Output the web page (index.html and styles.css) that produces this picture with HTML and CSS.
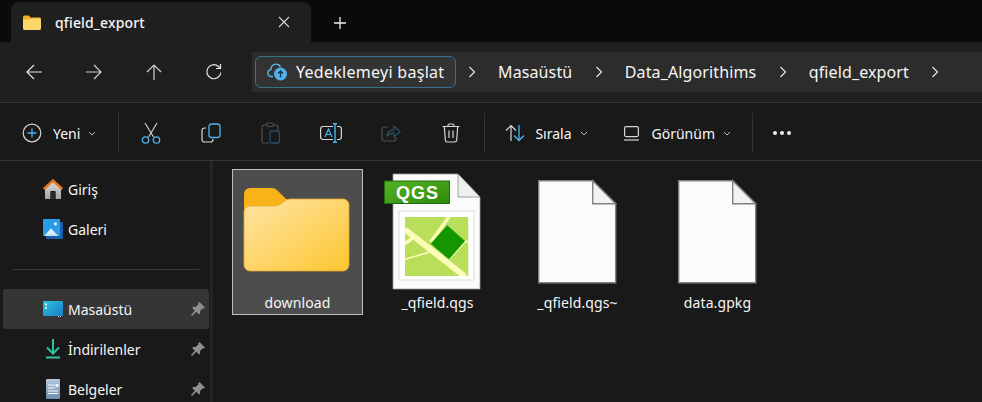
FILE: index.html
```html
<!DOCTYPE html>
<html lang="tr">

<head>
    <meta charset="UTF-8">
    <meta name="viewport" content="width=device-width, initial-scale=1.0">
    <title>qfield_export</title>
    <link rel="stylesheet" href="styles.css">
</head>

<body>
    <div class="tabbar">
        <div class="tab">
            <svg class="tab-icon" width="18" height="15" viewBox="0 0 18 15">
                <path d="M0 2a1.500 1.500 0 0 1 1.500-1.500h4.200l2 2H16.500a1.500 1.500 0 0 1 1.500 1.500V6H0z" fill="#f2b01e" />
                <path d="M0 4.500h7.500l1.500-1h7.500a1.500 1.500 0 0 1 1.500 1.500v8.500a1.500 1.500 0 0 1-1.500 1.500h-15A1.500 1.500 0 0 1 0 13.500z" fill="#fcd668" />
            </svg>
            <span class="tab-title">qfield_export</span>
            <svg class="tab-close" width="12" height="12" viewBox="0 0 12 12">
                <path d="M1 1l10 10M11 1L1 11" stroke="#d8d8d8" stroke-width="1.100" fill="none" />
            </svg>
        </div>
        <svg class="tab-add" width="14" height="14" viewBox="0 0 14 14">
            <path d="M7 1v12M1 7h12" stroke="#f0f0f0" stroke-width="1.300" fill="none" />
        </svg>
    </div>

    <div class="navbar">
        <button class="nav-btn" type="button">
            <svg width="18" height="18" viewBox="0 0 18 18"><path d="M17 9H2M9 2L2 9l7 7" class="line" /></svg>
        </button>
        <button class="nav-btn" type="button">
            <svg width="18" height="18" viewBox="0 0 18 18"><path d="M1 9h15M9 2l7 7-7 7" class="line dim" /></svg>
        </button>
        <button class="nav-btn" type="button">
            <svg width="18" height="18" viewBox="0 0 18 18"><path d="M9 17V2M2 9l7-7 7 7" class="line dim" /></svg>
        </button>
        <button class="nav-btn" type="button">
            <svg width="18" height="18" viewBox="0 0 18 18"><path d="M15.800 9.500A7 7 0 1 1 13.500 3.500L15.500 5.500M15.500 1v4.500H11" class="line" /></svg>
        </button>
        <div class="address">
            <div class="backup">
                <svg width="22" height="20" viewBox="0 0 22 20">
                    <path d="M6 14.500H4.500a3.500 3.500 0 0 1-.5-7A5 5 0 0 1 13.500 5" fill="none" stroke="#5cb6e6" stroke-width="1.400" />
                    <circle cx="13.500" cy="12" r="6.500" fill="#4fb3ea" />
                    <path d="M13.500 15.500v-6M11 11.500l2.500-2.500 2.500 2.500" fill="none" stroke="#12384f" stroke-width="1.400" />
                </svg>
                <span>Yedeklemeyi başlat</span>
            </div>
            <svg class="crumb-sep first" width="8" height="12" viewBox="0 0 8 12"><path d="M1.500 1l5 5-5 5" class="line" /></svg>
            <span class="crumb">Masaüstü</span>
            <svg class="crumb-sep" width="8" height="12" viewBox="0 0 8 12"><path d="M1.500 1l5 5-5 5" class="line" /></svg>
            <span class="crumb">Data_Algorithims</span>
            <svg class="crumb-sep" width="8" height="12" viewBox="0 0 8 12"><path d="M1.500 1l5 5-5 5" class="line" /></svg>
            <span class="crumb">qfield_export</span>
            <svg class="crumb-sep" width="8" height="12" viewBox="0 0 8 12"><path d="M1.500 1l5 5-5 5" class="line" /></svg>
        </div>
    </div>

    <div class="toolbar">
        <button class="tool tool-new" type="button">
            <svg width="20" height="20" viewBox="0 0 20 20">
                <circle cx="10" cy="10" r="8.800" fill="none" stroke="#d6d6d6" stroke-width="1.200" />
                <path d="M10 5.500v9M5.500 10h9" stroke="#4cb4f0" stroke-width="1.300" fill="none" />
            </svg>
            <span>Yeni</span>
            <svg class="chev" width="8" height="5" viewBox="0 0 8 5"><path d="M1 1l3 3 3-3" class="chev-line" /></svg>
        </button>
        <div class="tool-sep"></div>
        <div class="tool-icons">
            <button class="tool-icon" type="button">
                <svg width="20" height="22" viewBox="0 0 20 22">
                    <path d="M4 1l8.500 14M16 1L7.500 15" stroke="#d6d6d6" stroke-width="1.100" fill="none" />
                    <circle cx="4.500" cy="18" r="3.200" fill="none" stroke="#4cb4f0" stroke-width="1.300" />
                    <circle cx="15.500" cy="18" r="3.200" fill="none" stroke="#4cb4f0" stroke-width="1.300" />
                </svg>
            </button>
            <button class="tool-icon" type="button">
                <svg width="20" height="20" viewBox="0 0 20 20">
                    <path d="M5 5H3.500A2.500 2.500 0 0 0 1 7.500v9A2.500 2.500 0 0 0 3.500 19h6a2.500 2.500 0 0 0 2.500-2.500V16" fill="none" stroke="#d6d6d6" stroke-width="1.200" />
                    <rect x="8" y="1" width="11" height="13.500" rx="2.500" fill="none" stroke="#4cb4f0" stroke-width="1.300" />
                </svg>
            </button>
            <button class="tool-icon" type="button">
                <svg width="20" height="22" viewBox="0 0 20 22">
                    <path d="M5 3H3.500A2.500 2.500 0 0 0 1 5.500v13A2.500 2.500 0 0 0 3.500 21H8M13 3h1.500A2.500 2.500 0 0 1 17 5.500V8" fill="none" stroke="#505050" stroke-width="1.200" />
                    <rect x="5.500" y="1" width="7" height="3.500" rx="1.500" fill="none" stroke="#505050" stroke-width="1.200" />
                    <rect x="9" y="9" width="9.500" height="12" rx="2" fill="none" stroke="#2b4d63" stroke-width="1.300" />
                </svg>
            </button>
            <button class="tool-icon" type="button">
                <svg width="22" height="20" viewBox="0 0 22 20">
                    <path d="M13 3.500H3A2.500 2.500 0 0 0 .6 6v8A2.500 2.500 0 0 0 3 16.500h10M17 3.500h2A2.500 2.500 0 0 1 21.400 6v8a2.500 2.500 0 0 1-2.400 2.500h-2" fill="none" stroke="#d6d6d6" stroke-width="1.200" />
                    <path d="M5 14L8.500 6 12 14M6.300 11.500h4.400" fill="none" stroke="#4cb4f0" stroke-width="1.200" />
                    <path d="M13 .8h4M13 19.200h4M15 .8v18.400" fill="none" stroke="#4cb4f0" stroke-width="1.400" />
                </svg>
            </button>
            <button class="tool-icon" type="button">
                <svg width="20" height="20" viewBox="0 0 20 20">
                    <path d="M7 4H3.500A2.500 2.500 0 0 0 1 6.500v9A2.500 2.500 0 0 0 3.500 18h9a2.500 2.500 0 0 0 2.500-2.500V14" fill="none" stroke="#505050" stroke-width="1.200" />
                    <path d="M6 13c.5-4 3-6 7-6V3l6 5.500L13 14v-4c-3 0-5 1-7 3z" fill="none" stroke="#2b4d63" stroke-width="1.300" />
                </svg>
            </button>
            <button class="tool-icon" type="button">
                <svg width="18" height="20" viewBox="0 0 18 20">
                    <path d="M.5 3.500h17M6 3.500V2.500A1.500 1.500 0 0 1 7.500 1h3A1.500 1.500 0 0 1 12 2.500v1M2.300 3.500l1 13.500A2.200 2.200 0 0 0 5.500 19h7a2.200 2.200 0 0 0 2.200-2L15.700 3.500" fill="none" stroke="#d6d6d6" stroke-width="1.200" />
                    <path d="M7 7.500v7.500M11 7.500v7.500" fill="none" stroke="#d6d6d6" stroke-width="1.200" />
                </svg>
            </button>
        </div>
        <div class="tool-sep"></div>
        <button class="tool tool-sort" type="button">
            <svg width="20" height="18" viewBox="0 0 20 18">
                <path d="M6 17V1.500M1 6.500l5-5 5 5" fill="none" stroke="#d6d6d6" stroke-width="1.200" />
                <path d="M14 1v15.500M9 11.500l5 5 5-5" fill="none" stroke="#4cb4f0" stroke-width="1.300" />
            </svg>
            <span>Sırala</span>
            <svg class="chev" width="8" height="5" viewBox="0 0 8 5"><path d="M1 1l3 3 3-3" class="chev-line" /></svg>
        </button>
        <button class="tool tool-view" type="button">
            <svg width="17" height="15" viewBox="0 0 17 15">
                <rect x="1.600" y=".6" width="13.800" height="10" rx="1.500" fill="none" stroke="#d6d6d6" stroke-width="1.200" />
                <path d="M1 14h15" stroke="#d6d6d6" stroke-width="1.200" fill="none" />
            </svg>
            <span>Görünüm</span>
            <svg class="chev" width="8" height="5" viewBox="0 0 8 5"><path d="M1 1l3 3 3-3" class="chev-line" /></svg>
        </button>
        <div class="tool-sep"></div>
        <button class="tool-more" type="button">
            <i></i><i></i><i></i>
        </button>
    </div>

    <div class="main">
        <nav class="sidebar">
            <div class="side-item">
                <svg width="20" height="20" viewBox="0 0 20 20">
                    <defs>
                        <linearGradient id="homeWall" x1="0" y1="0" x2="0" y2="1">
                            <stop offset="0" stop-color="#dcdcdc" />
                            <stop offset="1" stop-color="#a4a4a4" />
                        </linearGradient>
                    </defs>
                    <path d="M2 8.500L10 2l8 6.500V20h-5.500v-8h-5v8H2z" fill="url(#homeWall)" />
                    <path d="M7.500 13h5v7h-5z" fill="#2a2a2a" />
                    <path d="M.8 10L10 1.500 19.200 10" fill="none" stroke="#e8761a" stroke-width="2.400" />
                </svg>
                <span>Giriş</span>
            </div>
            <div class="side-item">
                <svg width="20" height="20" viewBox="0 0 20 20">
                    <defs>
                        <linearGradient id="hill" x1="0" y1="0" x2="0" y2="1">
                            <stop offset="0" stop-color="#ffffff" />
                            <stop offset="1" stop-color="#bcdcf6" />
                        </linearGradient>
                    </defs>
                    <rect x="3" y="3" width="17" height="17" rx="1" fill="#1c5fa8" />
                    <rect x="0" y="0" width="17" height="17" rx="1" fill="#2b9be8" />
                    <path d="M1 17l7-7.500 7.500 7.500z" fill="url(#hill)" />
                    <circle cx="12.500" cy="5" r="1.400" fill="#fff" />
                </svg>
                <span>Galeri</span>
            </div>
            <div class="side-divider"></div>
            <div class="side-item active">
                <svg width="20" height="16" viewBox="0 0 20 16">
                    <defs>
                        <linearGradient id="desk" x1="0" y1="0" x2="1" y2="1">
                            <stop offset="0" stop-color="#2cc4dc" />
                            <stop offset="1" stop-color="#1a7cc6" />
                        </linearGradient>
                    </defs>
                    <rect width="20" height="15" rx="1" fill="url(#desk)" />
                    <rect x="2" y="2.500" width="2" height="2" fill="#e8f6fc" />
                    <rect x="2" y="6" width="2" height="2" fill="#d0eef8" />
                    <rect x="15" y="15" width="1" height="1" fill="#d0d0d0" />
                    <rect x="17" y="15" width="1" height="1" fill="#d0d0d0" />
                </svg>
                <span>Masaüstü</span>
                <svg class="pin" width="14" height="14" viewBox="0 0 14 14"><path d="M8.500 0L14 5.500l-1.200 1-1-.3-2.600 2.600-.2 2.700-1 1-2.700-2.700L1 14 0 13l3.900-4.300L1.200 6l1-1 2.700-.2 2.600-2.600-.3-1z" fill="#8f8f8f" /></svg>
            </div>
            <div class="side-item">
                <svg width="20" height="20" viewBox="0 0 20 20">
                    <path d="M10 0v14.500M4 8.500l6 6 6-6" fill="none" stroke="#2ec4a0" stroke-width="2" />
                    <rect x="3" y="17.500" width="14" height="2" fill="#2ec4a0" />
                </svg>
                <span>İndirilenler</span>
                <svg class="pin" width="14" height="14" viewBox="0 0 14 14"><path d="M8.500 0L14 5.500l-1.200 1-1-.3-2.600 2.600-.2 2.700-1 1-2.700-2.700L1 14 0 13l3.900-4.300L1.200 6l1-1 2.700-.2 2.600-2.600-.3-1z" fill="#8f8f8f" /></svg>
            </div>
            <div class="side-item">
                <svg width="20" height="20" viewBox="0 0 20 20">
                    <defs>
                        <linearGradient id="doc" x1="0" y1="0" x2="0" y2="1">
                            <stop offset="0" stop-color="#b4c8dc" />
                            <stop offset="1" stop-color="#6c8cb2" />
                        </linearGradient>
                    </defs>
                    <rect x="3" y="0" width="14" height="20" rx="1" fill="url(#doc)" />
                    <path d="M5 6h6.500M5 9h6.500M5 12h10M5 14.500h10" stroke="#f4f8fc" stroke-width="1.100" fill="none" />
                    <rect x="12.500" y="5" width="3" height="3" fill="#f4f8fc" />
                </svg>
                <span>Belgeler</span>
                <svg class="pin" width="14" height="14" viewBox="0 0 14 14"><path d="M8.500 0L14 5.500l-1.200 1-1-.3-2.600 2.600-.2 2.700-1 1-2.700-2.700L1 14 0 13l3.900-4.300L1.200 6l1-1 2.700-.2 2.600-2.600-.3-1z" fill="#8f8f8f" /></svg>
            </div>
        </nav>

        <div class="files">
            <div class="file selected">
                <svg width="131" height="124" viewBox="0 0 131 124">
                    <defs>
                        <linearGradient id="folderFront" x1="0" y1="0" x2="1" y2="1">
                            <stop offset="0" stop-color="#ffe5a6" />
                            <stop offset="1" stop-color="#fdc62f" />
                        </linearGradient>
                    </defs>
                    <path d="M12 25a6 6 0 0 1 6-6h22a8 8 0 0 1 6 3l8 8h57a6 6 0 0 1 6 6v14H12z" fill="#f8b318" />
                    <path d="M12 43a6 6 0 0 1 6-6h24c8 0 9-7 17-7h52a6 6 0 0 1 6 6v60a6 6 0 0 1-6 6H18a6 6 0 0 1-6-6z" fill="url(#folderFront)" stroke="#e0a52b" stroke-width=".8" />
                </svg>
                <span>download</span>
            </div>
            <div class="file">
                <svg width="131" height="124" viewBox="0 0 131 124">
                    <defs>
                        <linearGradient id="qgsTag" x1="0" y1="0" x2="1" y2="1">
                            <stop offset="0" stop-color="#57b324" />
                            <stop offset="1" stop-color="#2c8a0a" />
                        </linearGradient>
                    </defs>
                    <path d="M21 5h65l22 23v92H21z" fill="#fbfbfb" stroke="#9a9a9a" stroke-width=".8" />
                    <path d="M86 5l22 23H86z" fill="#efefef" stroke="#8a8a8a" stroke-width=".8" />
                    <rect x="27" y="42" width="75" height="69" fill="#fff" stroke="#dcdcdc" />
                    <svg x="33" y="48" width="63.500" height="59" viewBox="33 48 63.500 59">
                        <rect x="33" y="48" width="63.500" height="59" fill="#b9df5a" />
                        <path d="M33 60.500l60 47M77 48L58.700 73M33 74.700l9-6.700" fill="none" stroke="#fbfcb8" stroke-width="3.500" />
                        <path d="M33 60.500l60 47" fill="none" stroke="#fbfcb8" stroke-width="6" />
                        <path d="M33 90.300l27.300-8M77 90.300L94 72l3 1.500" fill="none" stroke="#fbfcb8" stroke-width="1.500" />
                        <path d="M58.700 74.700l16.600-18.400L93 72 77 90.300z" fill="#149600" />
                    </svg>
                    <rect x="12.500" y="12" width="65" height="22.500" fill="url(#qgsTag)" stroke="#1f6e0a" />
                    <text x="45.500" y="30" class="qgs-label">QGS</text>
                </svg>
                <span>_qfield.qgs</span>
            </div>
            <div class="file">
                <svg width="131" height="124" viewBox="0 0 131 124">
                    <path d="M26.700 11.700h54l23 23v79h-77z" fill="#fbfbfb" stroke="#808080" stroke-width="1.400" />
                    <path d="M80.700 11.700l23 23h-23z" fill="#f2f2f2" stroke="#808080" stroke-width="1.400" />
                </svg>
                <span>_qfield.qgs~</span>
            </div>
            <div class="file">
                <svg width="131" height="124" viewBox="0 0 131 124">
                    <path d="M26.700 11.700h54l23 23v79h-77z" fill="#fbfbfb" stroke="#808080" stroke-width="1.400" />
                    <path d="M80.700 11.700l23 23h-23z" fill="#f2f2f2" stroke="#808080" stroke-width="1.400" />
                </svg>
                <span>data.gpkg</span>
            </div>
        </div>
    </div>
</body>

</html>
```

FILE: styles.css
```css
* {
    box-sizing: border-box;
}

html,
body {
    height: 100%;
}

body {
    background: #191919;
    color: #f6f6f6;
    font-family: "Noto Sans", sans-serif;
    font-size: 14px;
    margin: 0;
    overflow: hidden;
}

button {
    background: none;
    border: 0;
    color: inherit;
    font: inherit;
    padding: 0;
}

svg {
    display: block;
    flex: none;
}

.line {
    fill: none;
    stroke: #e4e4e4;
    stroke-width: 1.200;
}

.line.dim {
    stroke: #d0d0d0;
}

/* tabs */
.tabbar {
    align-items: flex-end;
    background: #0a0a0a;
    display: flex;
    height: 42px;
    padding-left: 11px;
}

.tab {
    align-items: center;
    background: #1f1f1f;
    border-radius: 8px 8px 0 0;
    display: flex;
    height: 40px;
    padding-left: 12px;
    width: 300px;
}

.tab-title {
    font-size: 14px;
    font-weight: 500;
    letter-spacing: .15px;
    margin-left: 14px;
}

.tab-close {
    margin-left: auto;
    margin-right: 21px;
}

.tab-add {
    margin-bottom: 12px;
    margin-left: 22px;
}

/* back, forward, address */
.navbar {
    align-items: center;
    background: #1f1f1f;
    border-bottom: 1px solid #333;
    display: flex;
    height: 61px;
    padding-left: 4px;
    padding-bottom: 1px;
}

.nav-btn {
    align-items: center;
    display: flex;
    height: 40px;
    justify-content: center;
    width: 60px;
}

.address {
    align-items: center;
    background: #2c2c2c;
    display: flex;
    flex: 1;
    font-size: 16px;
    height: 40px;
    margin-left: 8px;
    padding-left: 3px;
}

.backup {
    align-items: center;
    background: #333;
    border: 1px solid #39708f;
    border-radius: 6px;
    display: flex;
    gap: 7px;
    height: 32px;
    letter-spacing: .28px;
    padding-left: 11px;
    width: 201px;
}

.crumb-sep {
    margin: 0 22px 0 22.500px;
}

.crumb-sep.first {
    margin-left: 12px;
}

.crumb {
    letter-spacing: .12px;
    white-space: nowrap;
}

/* command bar */
.toolbar {
    align-items: center;
    border-bottom: 1px solid #333;
    display: flex;
    height: 58px;
    padding-top: 3px;
}

.tool {
    align-items: center;
    display: flex;
    height: 40px;
}

.tool-new {
    margin-left: 22px;
    margin-right: 22px;
}

.tool-new span {
    margin-left: 11px;
}

.chev {
    margin-left: 8px;
}

.chev-line {
    fill: none;
    stroke: #bdbdbd;
    stroke-width: 1;
}

.tool-sep {
    background: #333;
    height: 40px;
    width: 1px;
}

.tool-icons {
    display: flex;
    margin: 0 3px 0 2px;
}

.tool-icon {
    align-items: center;
    display: flex;
    height: 40px;
    justify-content: center;
    width: 60px;
}

.tool-sort {
    margin-left: 20px;
}

.tool-sort span {
    margin-left: 10px;
}

.tool-view {
    margin-left: 35px;
    margin-right: 21px;
}

.tool-view span {
    margin-left: 12px;
}

.tool-more {
    align-items: center;
    display: flex;
    gap: 3px;
    height: 40px;
    justify-content: center;
    margin-left: 13px;
    width: 32px;
}

.tool-more i {
    background: #f0f0f0;
    border-radius: 50%;
    display: block;
    height: 4px;
    width: 4px;
}

/* body of the window */
.main {
    display: flex;
    height: 241px;
    overflow: hidden;
}

.sidebar {
    border-right: 3px solid #252525;
    flex: none;
    height: 241px;
    padding: 8px 3px 0;
    width: 213px;
}

.side-item {
    align-items: center;
    border-radius: 3px;
    display: flex;
    height: 40px;
    padding-left: 40px;
    width: 206px;
}

.side-item span {
    margin-left: 5px;
}

.side-item.active {
    background: #353535;
}

.pin {
    margin-left: auto;
    margin-right: 4px;
}

.side-divider {
    background: #3a3a3a;
    height: 1px;
    margin: 20px 8px 19px 10px;
}

.files {
    display: grid;
    gap: 9px;
    grid-template-columns: repeat(4, 131px);
    padding: 8px 0 0 19px;
}

.file {
    align-items: center;
    border: 1px solid transparent;
    display: flex;
    flex-direction: column;
    height: 146px;
}

.file > svg {
    margin: -1px;
}

.file span {
    letter-spacing: .1px;
    margin-top: 1px;
}

.file.selected {
    background: #4d4d4d;
    border-color: #bdbdbd;
}

.qgs-label {
    fill: #fff;
    font-family: "Liberation Sans", sans-serif;
    font-size: 18px;
    font-weight: 700;
    letter-spacing: 1px;
    text-anchor: middle;
}
```
